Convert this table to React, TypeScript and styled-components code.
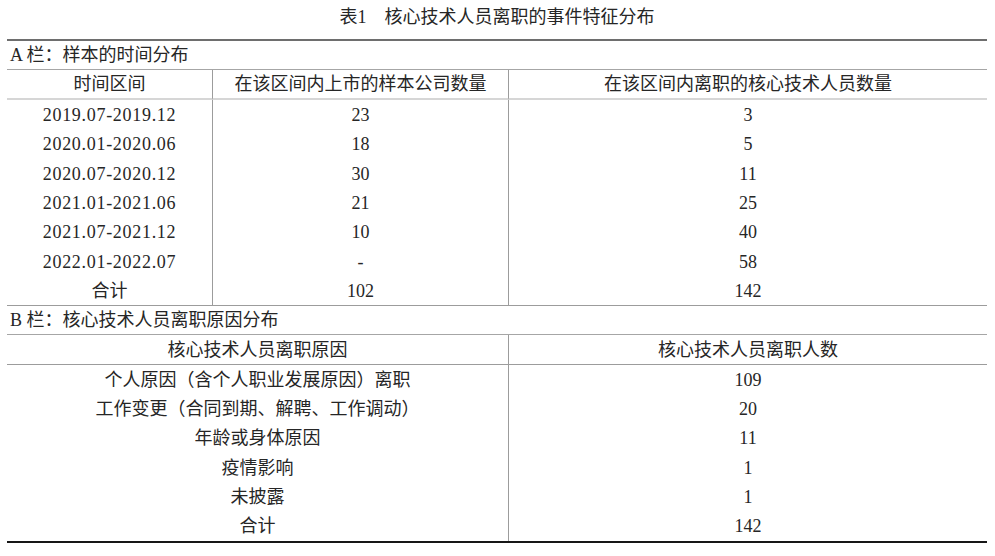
import React from 'react';
import styled, { createGlobalStyle } from 'styled-components';

const GlobalStyle = createGlobalStyle`
  html, body { margin: 0; padding: 0; background: #ffffff; }
  body {
    font-family: "Liberation Serif", "Noto Sans CJK SC", serif;
    font-weight: 400;
    color: #262626;
  }
`;

const Page = styled.div`
  width: 995px;
  box-sizing: border-box;
  padding: 0 8px 0 7px;
`;

const Caption = styled.div`
  height: 39px;
  display: flex;
  align-items: center;
  justify-content: center;
  padding-bottom: 5px;
  box-sizing: border-box;
  font-size: 18px;
  line-height: 20px;
  white-space: pre;
`;

const Table = styled.div`
  display: grid;
  grid-template-columns: 206px 296px 478px;
  border-top: 2px solid #6e6e6e;
  border-bottom: 2px solid #161616;
`;

const SectionTitle = styled.div`
  grid-column: 1 / -1;
  height: 29px;
  box-sizing: border-box;
  display: flex;
  align-items: center;
  padding-left: 3px;
  font-size: 18px;
  line-height: 20px;
  border-bottom: 1px solid #a6a6a6;
  white-space: pre;
`;

const HeadCell = styled.div<{ $span?: number; $divider?: boolean; $soft?: boolean }>`
  grid-column: span ${p => p.$span ?? 1};
  height: 30px;
  box-sizing: border-box;
  display: flex;
  align-items: center;
  justify-content: center;
  font-size: 18px;
  line-height: 20px;
  border-right: ${p => (p.$divider ? '1px solid #9c9c9c' : 'none')};
  border-bottom: ${p => (p.$soft ? '2px solid #d6d6d6' : '1px solid #9c9c9c')};
`;

const BodyCell = styled.div<{ $span?: number; $divider?: boolean; $last?: boolean; $h: number }>`
  grid-column: span ${p => p.$span ?? 1};
  height: ${p => p.$h}px;
  box-sizing: border-box;
  display: flex;
  align-items: center;
  justify-content: center;
  font-size: 18px;
  line-height: 20px;
  border-right: ${p => (p.$divider ? '1px solid #9c9c9c' : 'none')};
  border-bottom: ${p => (p.$last ? '1px solid #9c9c9c' : 'none')};
`;

const DateText = styled.span`
  letter-spacing: 0.7px;
`;

const periodRows: [string, string, string][] = [
  ['2019.07-2019.12', '23', '3'],
  ['2020.01-2020.06', '18', '5'],
  ['2020.07-2020.12', '30', '11'],
  ['2021.01-2021.06', '21', '25'],
  ['2021.07-2021.12', '10', '40'],
  ['2022.01-2022.07', '-', '58'],
];

const reasonRows: [string, string][] = [
  ['个人原因（含个人职业发展原因）离职', '109'],
  ['工作变更（合同到期、解聘、工作调动）', '20'],
  ['年龄或身体原因', '11'],
  ['疫情影响', '1'],
  ['未披露', '1'],
  ['合计', '142'],
];

const A_ROW = 29.45;
const B_ROW = 29.35;

export default function App() {
  return (
    <>
      <GlobalStyle />
      <Page>
        <Caption>{'表1　核心技术人员离职的事件特征分布'}</Caption>
        <Table>
          <SectionTitle>{'A 栏：样本的时间分布'}</SectionTitle>
          <HeadCell $divider $soft>时间区间</HeadCell>
          <HeadCell $divider $soft>在该区间内上市的样本公司数量</HeadCell>
          <HeadCell $soft>在该区间内离职的核心技术人员数量</HeadCell>
          {periodRows.map(([p, a, b]) => (
            <React.Fragment key={p}>
              <BodyCell $h={A_ROW} $divider><DateText>{p}</DateText></BodyCell>
              <BodyCell $h={A_ROW} $divider>{a}</BodyCell>
              <BodyCell $h={A_ROW}>{b}</BodyCell>
            </React.Fragment>
          ))}
          <BodyCell $h={A_ROW} $divider $last>合计</BodyCell>
          <BodyCell $h={A_ROW} $divider $last>102</BodyCell>
          <BodyCell $h={A_ROW} $last>142</BodyCell>

          <SectionTitle>{'B 栏：核心技术人员离职原因分布'}</SectionTitle>
          <HeadCell $span={2} $divider>核心技术人员离职原因</HeadCell>
          <HeadCell>核心技术人员离职人数</HeadCell>
          {reasonRows.map(([r, n]) => (
            <React.Fragment key={r}>
              <BodyCell $h={B_ROW} $span={2} $divider>{r}</BodyCell>
              <BodyCell $h={B_ROW}>{n}</BodyCell>
            </React.Fragment>
          ))}
        </Table>
      </Page>
    </>
  );
}
